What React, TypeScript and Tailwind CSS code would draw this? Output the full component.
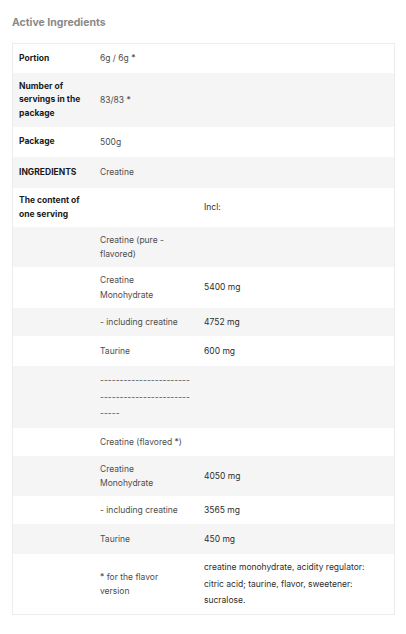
import React from "react";

type Row = {
  h: number;
  a?: React.ReactNode;
  b?: React.ReactNode;
  c?: React.ReactNode;
  gray: boolean;
};

const dashes1 = "-".repeat(23);

const rows: Row[] = [
  { h: 29, a: "Portion", b: "6g / 6g *", gray: false },
  { h: 54, a: <>Number of<br />servings in the<br />package</>, b: "83/83 *", gray: true },
  { h: 30, a: "Package", b: "500g", gray: false },
  { h: 31, a: "INGREDIENTS", b: "Creatine", gray: true },
  { h: 39, a: <>The content of<br />one serving</>, c: "Incl:", gray: false },
  { h: 40, b: <>Creatine (pure -<br />flavored)</>, gray: true },
  { h: 41, b: <>Creatine<br />Monohydrate</>, c: "5400 mg", gray: false },
  { h: 28, b: "- including creatine", c: "4752 mg", gray: true },
  { h: 30, b: "Taurine", c: "600 mg", gray: false },
  { h: 62, b: <span className="leading-[16.5px] block">{dashes1}<br />{dashes1}<br />-----</span>, gray: true },
  { h: 28, b: "Creatine (flavored *)", gray: false },
  { h: 40, b: <>Creatine<br />Monohydrate</>, c: "4050 mg", gray: true },
  { h: 28, b: "- including creatine", c: "3565 mg", gray: false },
  { h: 30, b: "Taurine", c: "450 mg", gray: true },
  {
    h: 60,
    b: <>* for the flavor<br />version</>,
    c: (
      <span className="block leading-[16.5px]">
        creatine monohydrate, acidity regulator:<br />
        citric acid; taurine, flavor, sweetener:<br />
        sucralose.
      </span>
    ),
    gray: false,
  },
];

export default function App() {
  return (
    <div
      className="w-[406px] h-[634px] bg-white"
      style={{ fontFamily: "Inter, 'Noto Sans', sans-serif" }}
    >
      <div className="pt-[16px] px-[12px]">
        <div className="text-[10.5px] font-bold text-[#8a8a8a] leading-[14px]">
          Active Ingredients
        </div>
        <div className="mt-[13px] w-[383px] border border-[#ececec] flex flex-col">
          {rows.map((r, i) => (
            <div
              key={i}
              className={`flex items-center ${r.gray ? "bg-[#f5f5f5]" : "bg-white"}`}
              style={{ height: r.h }}
            >
              <div className="w-[80px] pl-[6px] text-[8.5px] font-bold text-[#1a1a1a] leading-[13.5px] whitespace-nowrap">
                {r.a}
              </div>
              <div className="w-[104px] pl-[7px] text-[8.5px] text-[#4d4d4d] leading-[14.5px] whitespace-nowrap">
                {r.b}
              </div>
              <div className="flex-1 pl-[7px] text-[8.5px] text-[#2e2e2e] leading-[14.5px] whitespace-nowrap">
                {r.c}
              </div>
            </div>
          ))}
        </div>
      </div>
    </div>
  );
}
